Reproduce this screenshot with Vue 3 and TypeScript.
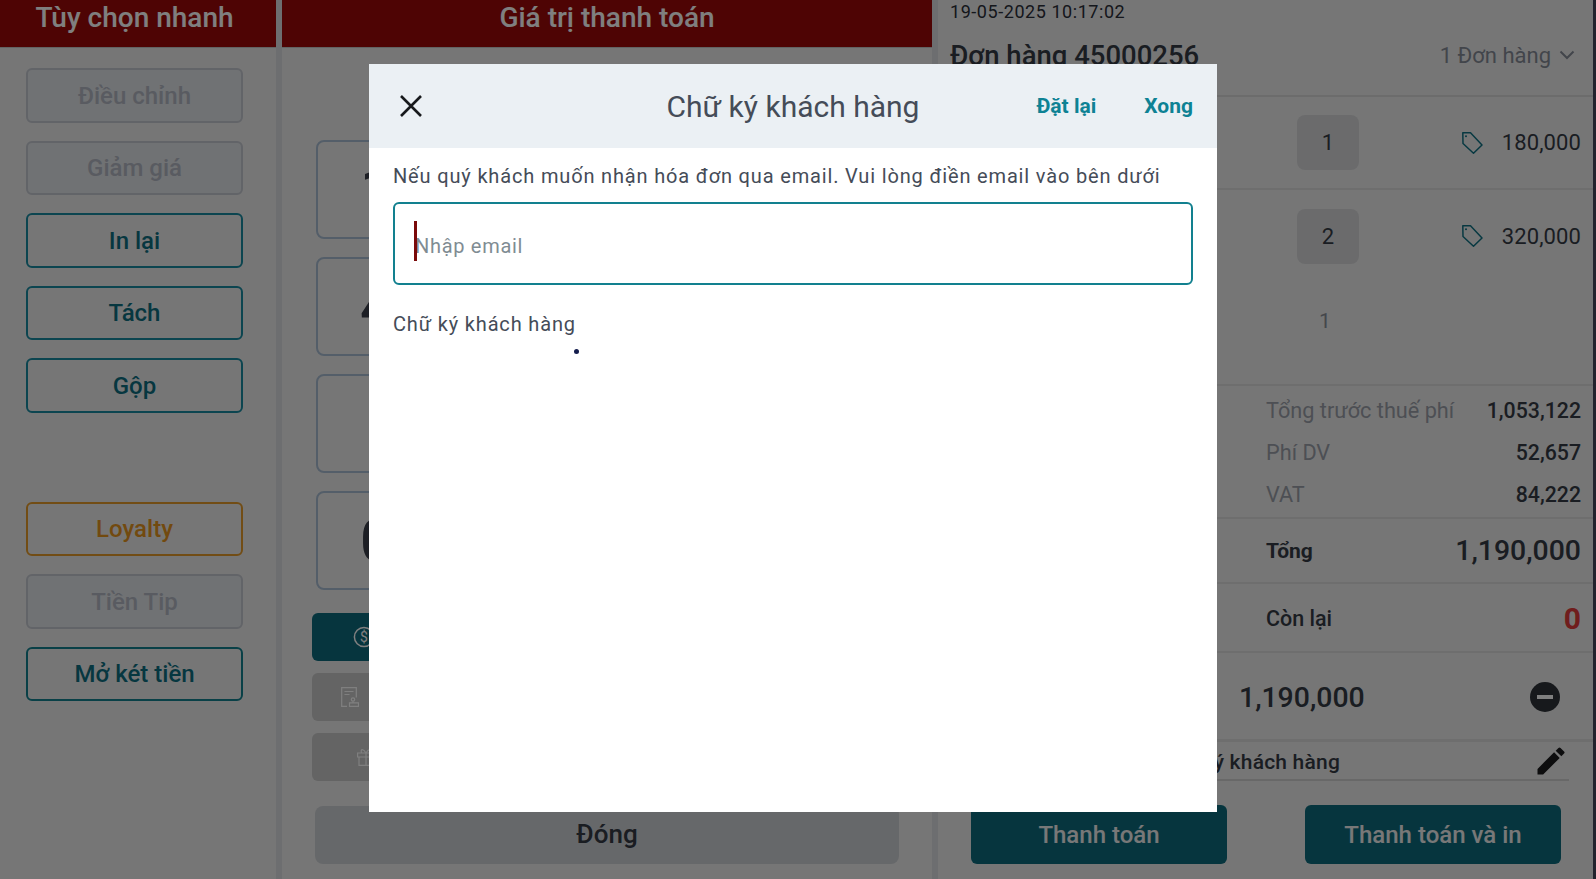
<script setup lang="ts">
const quick = [
  { label: 'Điều chỉnh', kind: 'off' },
  { label: 'Giảm giá', kind: 'off' },
  { label: 'In lại', kind: 'on' },
  { label: 'Tách', kind: 'on' },
  { label: 'Gộp', kind: 'on' },
]
const quick2 = [
  { label: 'Loyalty', kind: 'gold' },
  { label: 'Tiền Tip', kind: 'off' },
  { label: 'Mở két tiền', kind: 'strong' },
]
const keys = [
  { t: '1', pad: 42 },
  { t: '4', pad: 42 },
  { t: '7', pad: 70 },
  { t: '0', pad: 42 },
]
const summary = [
  { k: 'Tổng trước thuế phí', v: '1,053,122' },
  { k: 'Phí DV', v: '52,657' },
  { k: 'VAT', v: '84,222' },
]
</script>

<template>
  <div class="page">
    <section class="col left">
      <header class="bar">Tùy chọn nhanh</header>
      <div class="quick">
        <div class="group">
          <div v-for="b in quick" :key="b.label" class="qbtn" :class="b.kind">{{ b.label }}</div>
        </div>
        <div class="group">
          <div v-for="b in quick2" :key="b.label" class="qbtn" :class="b.kind">{{ b.label }}</div>
        </div>
      </div>
    </section>

    <section class="col mid">
      <header class="bar">Giá trị thanh toán</header>
      <div class="keys">
        <div v-for="k in keys" :key="k.t" class="key" :style="{ paddingLeft: k.pad + 'px' }">{{ k.t }}</div>
      </div>
      <div class="methods">
        <div class="method active">
          <svg class="i-cash" viewBox="0 0 24 24" width="24" height="24" fill="none" stroke="currentColor" stroke-width="1.5">
            <circle cx="12" cy="12" r="9.6" />
            <text x="12" y="17" font-size="14" text-anchor="middle" fill="currentColor" stroke="none" font-family="Roboto">$</text>
          </svg>
        </div>
        <div class="method">
          <svg class="i-bill" viewBox="0 0 18 20" width="18" height="20" fill="none" stroke="currentColor" stroke-width="1.2">
            <path d="M6 19.4H.7V.6h14.6v10M3.5 4.5h9M3.5 7.5h5" />
            <circle cx="12" cy="12.5" r="1.7" />
            <path d="M12 14.2v1.6M8.5 15.8h9v3.6h-9z" />
          </svg>
          <span class="m-text">Phiếu</span>
        </div>
        <div class="method">
          <svg class="i-gift" viewBox="0 0 18 18" width="18" height="18" fill="none" stroke="currentColor" stroke-width="1.2">
            <path d="M.6 5h16.8v4H.6zM2 9v8.4h14V9M9 5v12.4M9 5C6.5 .6 3 .6 4.6 5M9 5c2.5-4.4 6-4.4 4.4 0" />
          </svg>
        </div>
      </div>
      <div class="close-btn">Đóng</div>
    </section>

    <section class="col right">
      <div class="stamp">19-05-2025 10:17:02</div>
      <div class="order-head">
        <span class="order-title">Đơn hàng 45000256</span>
        <span class="order-count">1 Đơn hàng
          <svg viewBox="0 0 16 10" width="16" height="10" fill="none" stroke="currentColor" stroke-width="2"><path d="M1.5 1.5L8 8l6.5-6.5" /></svg>
        </span>
      </div>
      <div class="line ruled">
        <span class="qty">1</span>
        <svg class="tag" viewBox="0 0 21 22" width="21" height="22" fill="none" stroke="currentColor" stroke-width="1.5" stroke-linejoin="round"><path d="M.8.8H8.5L20 13l-8.5 8.2L1 11.5z" /><circle cx="4" cy="4.2" r="1" fill="currentColor" stroke="none" /></svg>
        <span class="price">180,000</span>
      </div>
      <div class="line two">
        <span class="qty">2</span>
        <svg class="tag" viewBox="0 0 21 22" width="21" height="22" fill="none" stroke="currentColor" stroke-width="1.5" stroke-linejoin="round"><path d="M.8.8H8.5L20 13l-8.5 8.2L1 11.5z" /><circle cx="4" cy="4.2" r="1" fill="currentColor" stroke="none" /></svg>
        <span class="price">320,000</span>
      </div>
      <div class="line plain ruled"><span class="plain-qty">1</span></div>
      <div class="summary">
        <div v-for="s in summary" :key="s.k" class="srow">
          <span class="sk">{{ s.k }}</span><span class="sv">{{ s.v }}</span>
        </div>
      </div>
      <div class="total">
        <span class="tk">Tổng</span><span class="tv">1,190,000</span>
      </div>
      <div class="remain">
        <span class="rk">Còn lại</span><span class="rv">0</span>
      </div>
      <div class="paid">
        <span class="pv">1,190,000</span>
        <span class="minus"><i></i></span>
      </div>
      <div class="sign">
        <span class="sign-text">Chữ ký khách hàng</span>
        <svg viewBox="0 0 24 24" width="36" height="36" fill="#1b1b1d"><path d="M3 17.25V21h3.75L17.81 9.94l-3.75-3.75L3 17.25zM20.71 7.04a1 1 0 0 0 0-1.41l-2.34-2.34a1 1 0 0 0-1.41 0l-1.83 1.83 3.75 3.75 1.83-1.83z" /></svg>
      </div>
      <div class="pay-row">
        <div class="pay">Thanh toán</div>
        <div class="pay">Thanh toán và in</div>
      </div>
    </section>

    <div class="scrim"></div>

    <div class="modal">
      <header class="m-head">
        <svg class="m-x" viewBox="0 0 24 24" width="24" height="24" fill="none" stroke="#17191c" stroke-width="2.6"><path d="M2 2l20 20M22 2L2 22" /></svg>
        <h2 class="m-title">Chữ ký khách hàng</h2>
        <div class="m-actions"><span>Đặt lại</span><span>Xong</span></div>
      </header>
      <div class="m-body">
        <p class="m-hint">Nếu quý khách muốn nhận hóa đơn qua email. Vui lòng điền email vào bên dưới</p>
        <div class="m-input"><i class="caret"></i><span>Nhập email</span></div>
        <p class="m-label">Chữ ký khách hàng</p>
        <div class="pad"><i class="dot"></i></div>
      </div>
    </div>
  </div>
</template>

<style>
html, body { margin: 0; padding: 0; }
</style>

<style scoped>
.page {
  position: relative;
  width: 1596px;
  height: 879px;
  overflow: hidden;
  display: flex;
  background: #dbdde0;
  font-family: Roboto, "Noto Sans", sans-serif;
  color: #353b45;
}
.col { background: #ededed; height: 879px; display: flex; flex-direction: column; box-sizing: border-box; flex: none; }
.left { width: 276px; margin-right: 6px; }
.mid { width: 650px; margin-right: 6px; }
.right { width: 658px; padding-left: 12px; border-right: 3px solid #46465a; }
.bar {
  height: 48px;
  flex: none;
  background: #9c0808;
  color: #ffffff;
  font-size: 28px;
  font-weight: 500;
  line-height: 36px;
  text-align: center;
  box-sizing: border-box;
  border-bottom: 1px solid #c7c7c7;
}
.left .bar { padding-right: 7px; }
.quick { padding: 20px 0 0 26px; display: flex; flex-direction: column; gap: 89px; }
.group { display: flex; flex-direction: column; gap: 18px; }
.qbtn {
  height: 54.5px;
  width: 217px;
  box-sizing: border-box;
  border: 2px solid #188aa0;
  border-radius: 6px;
  padding-top: 1px;
  display: flex;
  align-items: center;
  justify-content: center;
  font-size: 24px;
  font-weight: 500;
  color: #0f6b78;
}
.qbtn.off { background: #e1e4e8; border-color: #c4c8d0; color: #b2b7c2; }
.qbtn.on { color: #0d6e80; }
.qbtn.strong { color: #0d6e80; border-color: #12808f; }
.qbtn.gold { border-color: #e59a2a; color: #e5941f; }

.keys { padding: 92px 0 0 34px; display: flex; flex-direction: column; gap: 18px; }
.key {
  width: 640px;
  height: 99px;
  box-sizing: border-box;
  border: 2px solid #a8bcd2;
  border-radius: 8px;
  font-size: 60px;
  font-weight: 500;
  color: #3b3f4a;
  display: flex;
  align-items: center;
}
.methods { padding: 23px 0 0 30px; display: flex; flex-direction: column; gap: 12px; }
.method {
  width: 600px;
  height: 48px;
  border-radius: 6px;
  background: #c8c8c8;
  color: #ffffff;
  display: flex;
  align-items: center;
}
.method.active { background: #0d6a7d; }
.i-cash { margin-left: 40px; }
.i-bill { margin-left: 29px; }
.i-gift { margin-left: 45px; }
.m-text { margin-left: 9px; font-size: 20px; }
.close-btn {
  margin: 25px 0 0 33px;
  width: 584px;
  height: 58px;
  padding-bottom: 2px;
  box-sizing: border-box;
  border-radius: 8px;
  background: #cdd0d4;
  color: #353b45;
  display: flex;
  align-items: center;
  justify-content: center;
  font-size: 26px;
  font-weight: 500;
}

.stamp { height: 22px; font-size: 18px; line-height: 24px; color: #2a2e38; letter-spacing: .55px; }
.order-head { height: 75px; display: flex; justify-content: space-between; align-items: center; border-bottom: 2px solid #d8d8d8; padding: 0 18px 7px 0; box-sizing: border-box; }
.order-title { font-size: 27.5px; font-weight: 500; color: #353b45; }
.order-count { font-size: 22px; color: #858b96; display: flex; align-items: center; gap: 8px; }
.line { height: 92px; display: flex; align-items: center; padding: 0 12px 0 347px; box-sizing: border-box; }
.line.ruled { height: 93px; border-bottom: 2px solid #dcdcdc; }
.qty { width: 62px; height: 55px; background: #d6d7d9; border-radius: 8px; display: flex; align-items: center; justify-content: center; font-size: 22px; }
.tag { color: #0f7183; margin: 0 19px 0 auto; }
.price { font-size: 22px; letter-spacing: .1px; color: #353b45; }
.line.plain { height: 104px; padding: 0 0 24px 369px; }
.plain-qty { font-size: 21px; color: #8a8f99; }
.summary { padding: 2px 12px 0 316px; border-bottom: 2px solid #dcdcdc; height: 133px; display: flex; flex-direction: column; justify-content: center; gap: 13px; box-sizing: border-box; }
.srow { display: flex; justify-content: space-between; line-height: 29px; }
.sk { font-size: 21.7px; color: #9a9fa8; }
.sv { font-size: 21.3px; font-weight: 500; color: #353b45; }
.total, .remain { display: flex; justify-content: space-between; align-items: center; border-bottom: 2px solid #dcdcdc; padding: 0 12px 0 316px; box-sizing: border-box; }
.total { height: 65px; }
.remain { height: 69px; padding-top: 2px; }
.tk { font-size: 21px; font-weight: 700; color: #353b45; }
.tv { font-size: 28.4px; font-weight: 500; }
.rk { font-size: 21.5px; font-weight: 500; }
.rv { font-size: 30px; font-weight: 700; color: #e03a3a; }
.paid { height: 89px; display: flex; align-items: center; border-bottom: 3px solid #dcdcdc; box-sizing: border-box; padding: 2px 0 0 289px; }
.pv { font-size: 28.4px; font-weight: 500; }
.minus { margin-left: auto; margin-right: 33px; width: 30px; height: 30px; border-radius: 50%; background: #2e3238; display: flex; align-items: center; justify-content: center; }
.minus i { width: 16px; height: 4px; background: #ffffff; display: block; }
.sign { height: 39px; margin-right: 24px; display: flex; justify-content: flex-end; align-items: center; border-bottom: 2px solid #d0d0d0; box-sizing: border-box; }
.sign-text { font-size: 21px; font-weight: 500; margin-right: 193px; padding-top: 2px; letter-spacing: .2px; }
.pay-row { display: flex; gap: 78px; padding: 24px 0 0 21px; }
.pay { width: 256px; height: 59px; border-radius: 6px; background: #0d6a7d; color: #f0f0f0; display: flex; align-items: center; justify-content: center; font-size: 24px; font-weight: 500; }

.scrim { position: absolute; inset: 0; background: rgba(0, 0, 0, .5); }

.modal { position: absolute; left: 369px; top: 64px; width: 848px; height: 748px; background: #fff; }
.m-head { height: 84px; background: #ebf0f4; display: flex; align-items: center; justify-content: center; position: relative; }
.m-x { position: absolute; left: 30px; top: 30px; }
.m-title { margin: 1px 0 0; font-size: 30px; font-weight: 400; color: #454c58; }
.m-actions { position: absolute; right: 24px; top: 0; height: 84px; display: flex; align-items: center; gap: 48px; font-size: 21px; font-weight: 700; color: #0e8294; }
.m-body { padding: 0 24px; }
.m-hint { margin: 0; padding-top: 16px; font-size: 20px; line-height: 24px; letter-spacing: .84px; color: #454c58; }
.m-input { margin-top: 14px; height: 83px; box-sizing: border-box; border: 2px solid #12808f; border-radius: 6px; position: relative; display: flex; align-items: center; padding: 5px 0 0 20px; font-size: 20px; letter-spacing: .7px; color: #7f8c93; }
.caret { position: absolute; left: 19px; top: 17px; width: 3px; height: 40px; background: #7a0a0a; }
.m-label { margin: 27px 0 0; font-size: 20px; line-height: 24px; letter-spacing: .84px; color: #454c58; }
.pad { position: relative; height: 400px; }
.dot { position: absolute; left: 181px; top: 13px; width: 5px; height: 5px; border-radius: 50%; background: #141d4d; }
</style>
